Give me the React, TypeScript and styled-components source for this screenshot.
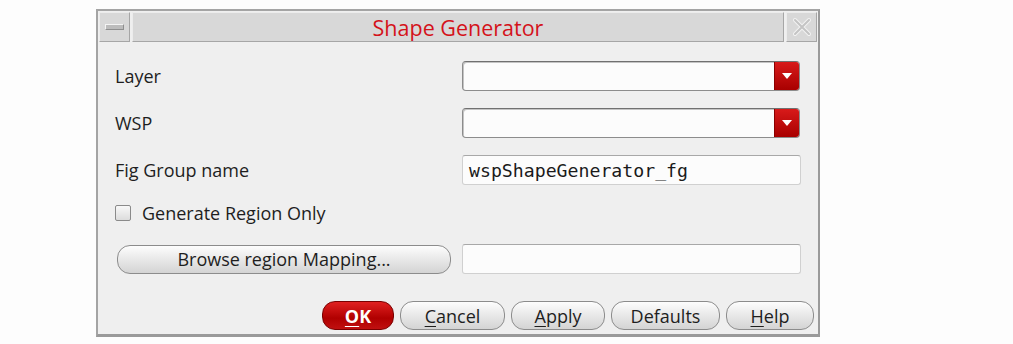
import React from 'react';
import styled, { createGlobalStyle } from 'styled-components';

const GlobalStyle = createGlobalStyle`
    body {
        margin: 0;
        background: #fdfdfd;
        font-family: "Open Sans", "Noto Sans", sans-serif;
    }
`

const Page = styled.div`
    padding: 9px 0 0 96px;
`

const Window = styled.div`
    width: 720px;
    height: 323px;
    background: #efefef;
    border-left: 2px solid #a4a4a4;
    border-top: 2px solid #a4a4a4;
    border-right: 2px solid #9a9a9a;
    border-bottom: 3px solid #9a9a9a;
    display: flex;
    flex-direction: column;
`

const TitleBar = styled.div`
    display: flex;
    align-items: stretch;
    height: 30px;
    margin: 1px 1px 0 1px;
    gap: 2px;
`

const TitleBox = styled.div<{ $grow?: boolean }>`
    ${p => p.$grow ? 'flex: 1;' : 'width: 29px;'}
    display: flex;
    align-items: center;
    justify-content: center;
    background: #d8d8d8;
    border: 1px solid #a6a6a6;
    border-top-color: #ececec;
    border-left-color: #ececec;
    color: #d4121a;
    font-size: 21.5px;
`

const MinBar = styled.div`
    width: 17px;
    height: 4px;
    background: #bcbcbc;
    border: 1px solid #8f8f8f;
    border-top-color: #f4f4f4;
    border-left-color: #f4f4f4;
`

const Body = styled.div`
    flex: 1;
    display: flex;
    flex-direction: column;
    padding: 19px 17px 0 17px;
    gap: 17px;
`

const Row = styled.div<{ $h?: number }>`
    display: flex;
    align-items: center;
    justify-content: space-between;
    height: ${p => p.$h ?? 30}px;
    font-size: 18px;
    color: #1e1e1e;
`

const Combo = styled.div`
    width: 336px;
    height: 28px;
    margin-right: 1px;
    display: flex;
    background: #fcfcfc;
    border: 1px solid #8c8c8c;
    border-top-color: #707070;
    border-radius: 4px;
    box-shadow: inset 1px 1px 0 #c4c4c4;
    overflow: hidden;
`

const ComboText = styled.div`
    flex: 1;
`

const DropBtn = styled.div`
    width: 24px;
    display: flex;
    align-items: center;
    justify-content: center;
    background: linear-gradient(#d81a1a, #a80000);
    border-left: 1px solid #8a0000;
`

const TextField = styled.div`
    width: 331px;
    height: 28px;
    padding-left: 6px;
    display: flex;
    align-items: center;
    background: #fcfcfc;
    border: 1px solid #d0d0d0;
    border-top-color: #a8a8a8;
    border-radius: 3px;
    font-family: "DejaVu Sans Mono", "Liberation Mono", monospace;
    font-size: 18.2px;
    color: #1a1a1a;
`

const CheckLabel = styled.label`
    display: flex;
    align-items: center;
    gap: 11px;
    font-size: 18px;
    color: #1e1e1e;
    margin-top: -3px;
`

const CheckBox = styled.span`
    width: 14px;
    height: 14px;
    background: linear-gradient(#f8f8f8, #dcdcdc);
    border: 1px solid #8a8a8a;
    border-radius: 2px;
`

const PillButton = styled.button<{ $w: number; $primary?: boolean }>`
    width: ${p => p.$w}px;
    height: 29px;
    border-radius: 13px;
    border: 1px solid ${p => p.$primary ? '#7a0000' : '#8c8c8c'};
    background: ${p => p.$primary
        ? 'linear-gradient(#e02020, #b00000 60%, #c01010)'
        : 'linear-gradient(#fdfdfd, #e6e6e6 55%, #d4d4d4)'};
    color: ${p => p.$primary ? '#fff' : '#1e1e1e'};
    font-family: "Open Sans", "Noto Sans", sans-serif;
    font-weight: ${p => p.$primary ? 700 : 400};
    font-size: 18px;
    line-height: 1;
    padding: 0;
    cursor: pointer;
`

const BrowseButton = styled(PillButton)`
    margin-left: 2px;
`

const Footer = styled.div`
    margin-top: auto;
    display: flex;
    justify-content: flex-end;
    gap: 6px;
    padding: 0 4px 4px 0;
`

const Key = styled.span`
    text-decoration: underline;
    text-underline-offset: 3px;
`

function Triangle() {
    return (
        <svg width="10" height="6" viewBox="0 0 10 6">
            <polygon points="0,0 10,0 5,6" fill="#fff" />
        </svg>
    )
}

function CloseX() {
    return (
        <svg width="20" height="20" viewBox="0 0 20 20">
            <path d="M3 3 L17 17 M17 3 L3 17" stroke="#f2f2f2" strokeWidth="4" strokeLinecap="round" />
            <path d="M3 3 L17 17 M17 3 L3 17" stroke="#c4c4c4" strokeWidth="2" strokeLinecap="round" />
        </svg>
    )
}

export default function App() {
    return (
        <Page>
            <GlobalStyle />
            <Window>
                <TitleBar>
                    <TitleBox><MinBar /></TitleBox>
                    <TitleBox $grow>Shape Generator</TitleBox>
                    <TitleBox><CloseX /></TitleBox>
                </TitleBar>
                <Body>
                    <Row>
                        <span>Layer</span>
                        <Combo><ComboText /><DropBtn><Triangle /></DropBtn></Combo>
                    </Row>
                    <Row>
                        <span>WSP</span>
                        <Combo><ComboText /><DropBtn><Triangle /></DropBtn></Combo>
                    </Row>
                    <Row>
                        <span>Fig Group name</span>
                        <TextField>wspShapeGenerator_fg</TextField>
                    </Row>
                    <Row $h={25}>
                        <CheckLabel><CheckBox />Generate Region Only</CheckLabel>
                    </Row>
                    <Row>
                        <BrowseButton $w={334}>Browse region Mapping...</BrowseButton>
                        <TextField />
                    </Row>
                </Body>
                <Footer>
                    <PillButton $w={72} $primary><Key>O</Key>K</PillButton>
                    <PillButton $w={105}><Key>C</Key>ancel</PillButton>
                    <PillButton $w={94}><Key>A</Key>pply</PillButton>
                    <PillButton $w={109}>Defaults</PillButton>
                    <PillButton $w={88}><Key>H</Key>elp</PillButton>
                </Footer>
            </Window>
        </Page>
    )
}
